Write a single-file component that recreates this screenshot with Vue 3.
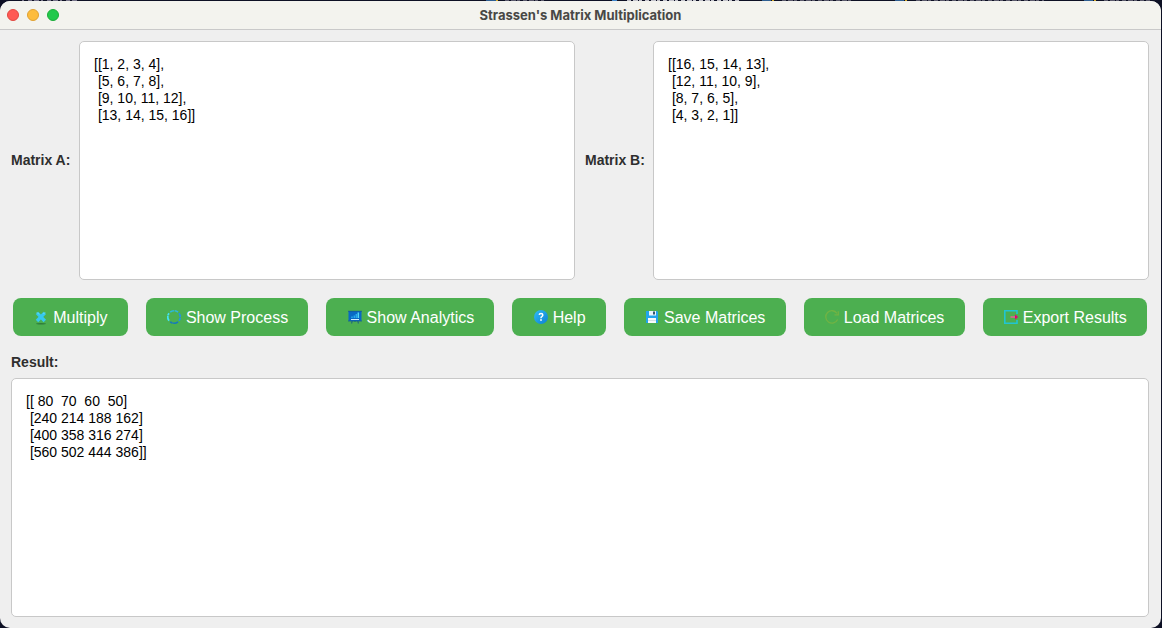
<script setup>
import { ref } from 'vue'

const matrixA = ref('[[1, 2, 3, 4],\n [5, 6, 7, 8],\n [9, 10, 11, 12],\n [13, 14, 15, 16]]')
const matrixB = ref('[[16, 15, 14, 13],\n [12, 11, 10, 9],\n [8, 7, 6, 5],\n [4, 3, 2, 1]]')
const result = ref('[[ 80  70  60  50]\n [240 214 188 162]\n [400 358 316 274]\n [560 502 444 386]]')
</script>

<template>
  <div class="desktop">
    <!-- Sliver of the editor tabs behind the window -->
    <svg class="backdrop" viewBox="0 0 1162 1" preserveAspectRatio="none" aria-hidden="true">
      <g fill="none" stroke-width="1">
        <path d="M22 .5H78" stroke="#77748a" stroke-dasharray="2 4 4 2 5 2" />
        <path d="M505 .5H544M782 .5H854M916 .5H1044M1104 .5H1150" stroke="#5b5a6c" stroke-dasharray="4 2 5 1 3 3" />
        <path d="M627 .5H740" stroke="#c4c4cc" stroke-dasharray="4 2 5 1 3 3" />
        <path d="M486 .5H496M762 .5H771M895 .5H904M1084 .5H1093" stroke="#2f5f92" />
        <path d="M612 .5H617" stroke="#3f86cc" />
        <path d="M496 .5H498M772 .5H774M905 .5H907M1094 .5H1096" stroke="#d3aa2c" />
      </g>
    </svg>
    <div class="window">
      <header class="titlebar">
        <div class="lights">
          <button class="light close" aria-label="Close"></button>
          <button class="light minimize" aria-label="Minimize"></button>
          <button class="light maximize" aria-label="Maximize"></button>
        </div>
        <h1>Strassen's Matrix Multiplication</h1>
      </header>

      <main>
        <section class="inputs">
          <div class="field">
            <label for="a">Matrix A:</label>
            <textarea id="a" v-model="matrixA" spellcheck="false"></textarea>
          </div>
          <div class="field">
            <label for="b">Matrix B:</label>
            <textarea id="b" v-model="matrixB" spellcheck="false"></textarea>
          </div>
        </section>

        <section class="actions">
          <button class="action">
            <svg viewBox="0 0 16 16" aria-hidden="true">
              <ellipse cx="8" cy="14.8" rx="5" ry="0.8" fill="#2f7d3c" />
              <path d="M4 3.8 11.8 12M11.8 3.8 4 12" stroke="#35c8ee" stroke-width="3.4" />
              <path d="M4 3.4 6 5.4M10.4 5 12 3.4" stroke="#6be3f8" stroke-width="1" />
            </svg>
            Multiply
          </button>
          <button class="action">
            <svg viewBox="0 0 16 16" fill="none" stroke-width="1.7" aria-hidden="true">
              <path d="M4.2 3.1A6.3 6.3 0 0 1 12 3.1" stroke="#2bb9e0" stroke-dasharray="4 0.6" />
              <path d="M13 4.2A6.3 6.3 0 0 1 13 11.8" stroke="#2196e0" stroke-dasharray="4 0.6" />
              <path d="M12 12.9A6.3 6.3 0 0 1 4.2 12.9" stroke="#1479bd" stroke-dasharray="5 0.6" />
              <path d="M3 11.8A6.3 6.3 0 0 1 3 4.2" stroke="#42e4f4" stroke-dasharray="5 0.6" />
            </svg>
            Show Process
          </button>
          <button class="action">
            <svg viewBox="0 0 16 16" aria-hidden="true">
              <path d="M5.5 11 4.5 14.5M10.5 11 11.5 14.5M8 11V13" stroke="#266f78" stroke-width="1.2" />
              <rect x="1.5" y="2" width="13" height="10" fill="#0869c4" />
              <path d="M1 2.3H15M1 12H15" stroke="#165a91" stroke-width="0.8" />
              <path d="M4 10.5H12" stroke="#d4edff" stroke-width="1" />
              <path d="M5 9V7.5M7.3 9V6.5M9.3 9V5" stroke="#27a9ed" stroke-width="1.5" />
              <path d="M11.3 9V3.5" stroke="#52d8f4" stroke-width="1.5" />
            </svg>
            Show Analytics
          </button>
          <button class="action">
            <svg viewBox="0 0 16 16" aria-hidden="true">
              <defs>
                <linearGradient id="help-fill" x1="0" y1="0" x2="1" y2="1">
                  <stop stop-color="#2fbcf3" /><stop offset="1" stop-color="#0c7fd5" />
                </linearGradient>
              </defs>
              <circle cx="8" cy="8" r="7" fill="url(#help-fill)" />
              <path d="M6.2 5.9Q6.3 4.6 8 4.6 9.8 4.6 9.8 6.1 9.8 7 8.8 7.6 8 8 8 9.2" fill="none" stroke="#fff" stroke-width="1.5" />
              <circle cx="8" cy="11" r="0.9" fill="#fff" />
            </svg>
            Help
          </button>
          <button class="action">
            <svg viewBox="0 0 16 16" aria-hidden="true">
              <path d="M2 2H13L14 3V14H2Z" fill="#21a5ed" />
              <path d="M5 2H12V6.5H5Z" fill="#e9f5fb" />
              <path d="M9 2.5H11V5.5H9Z" fill="#31566c" />
              <path d="M4 9H12V14H4Z" fill="#f8fafb" />
              <path d="M4 11.5H12" stroke="#c5d3db" stroke-width="0.7" />
            </svg>
            Save Matrices
          </button>
          <button class="action">
            <svg viewBox="0 0 16 16" fill="none" stroke="#72b343" stroke-width="1.3" aria-hidden="true">
              <path d="M13.6 10.5A6.2 6.2 0 1 1 13 4.3" />
              <path d="M14.3 2.2V5.8H10.5" />
            </svg>
            Load Matrices
          </button>
          <button class="action">
            <svg viewBox="0 0 16 16" fill="none" aria-hidden="true">
              <path d="M14 5V1.8H1.8V14.2H14V11" stroke="#20c5d2" stroke-width="1.6" />
              <path d="M7.5 8H12" stroke="#b97982" stroke-width="2" />
              <path d="M12 5.4 15.2 8 12 10.6Z" fill="#e50072" />
            </svg>
            Export Results
          </button>
        </section>

        <section class="result">
          <label for="result">Result:</label>
          <textarea id="result" v-model="result" readonly spellcheck="false"></textarea>
        </section>
      </main>
    </div>
  </div>
</template>

<style>
body {
  margin: 0;
}
</style>

<style scoped>
.desktop {
  box-sizing: border-box;
  min-height: 100vh;
  display: flex;
  flex-direction: column;
  background: #0d1024;
  font-family: "Liberation Sans", Arial, sans-serif;
}
.backdrop {
  display: block;
  width: 100%;
  height: 1px;
}
.window {
  flex: 1;
  display: flex;
  flex-direction: column;
  margin-right: 1px;
  background: #efefef;
  border-radius: 10px;
  overflow: hidden;
}
.titlebar {
  display: grid;
  grid-template-columns: 1fr auto 1fr;
  align-items: center;
  height: 28px;
  padding: 0 7px;
  background: #f3f3ee;
  border-bottom: 1px solid #c9c9c9;
}
.lights {
  display: flex;
  gap: 8px;
}
.light {
  box-sizing: border-box;
  width: 12px;
  height: 12px;
  padding: 0;
  border-radius: 50%;
}
.close {
  background: #ff5a54;
  border: 1px solid #e04840;
}
.minimize {
  background: #fdbc3c;
  border: 1px solid #dfa032;
}
.maximize {
  background: #22c94c;
  border: 1px solid #1bac38;
}
h1 {
  margin: 0;
  font: bold 13px/16px Inter, sans-serif;
  color: #484846;
}
main {
  flex: 1;
  display: flex;
  flex-direction: column;
  gap: 18px;
  padding: 11px 12px 11px 11px;
}
.inputs {
  flex: 1 0 0;
  display: grid;
  grid-template-columns: 1fr 1fr;
  gap: 10px;
}
.field {
  display: flex;
  align-items: center;
  gap: 8px;
}
label {
  font-size: 14px;
  line-height: 17px;
  font-weight: bold;
  color: #2e2e2e;
  white-space: nowrap;
}
.field label {
  min-width: 60px;
}
textarea {
  box-sizing: border-box;
  display: block;
  flex: 1 1 0;
  align-self: stretch;
  min-width: 0;
  min-height: 100px;
  margin: 0;
  padding: 14px;
  border: 1px solid #c8c8c8;
  border-radius: 5px;
  outline: none;
  resize: none;
  background: #fff;
  color: #000;
  font: 14px/17px "Liberation Sans", Arial, sans-serif;
}
.actions {
  display: flex;
  gap: 18px;
  padding: 0 2px;
}
.action {
  flex: 1 0 auto;
  display: flex;
  align-items: center;
  justify-content: center;
  gap: 4px;
  height: 38px;
  padding: 2px 20px 0;
  border: 0;
  border-radius: 8px;
  background: #4caf50;
  color: #fff;
  font: 16px/20px "Liberation Sans", Arial, sans-serif;
  white-space: nowrap;
}
.action svg {
  width: 16px;
  height: 16px;
  margin-bottom: 2px;
}
.result {
  flex: 1 0 24px;
  display: flex;
  flex-direction: column;
  gap: 7px;
}
</style>
